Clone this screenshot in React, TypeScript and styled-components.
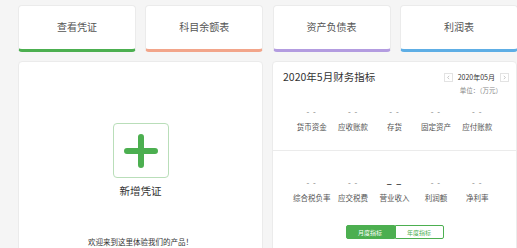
import styled, { createGlobalStyle } from "styled-components"

const Global = createGlobalStyle`
    html, body {
        margin: 0;
        background: #f5f5f5;
        font-family: "Noto Sans CJK SC", "Liberation Sans", sans-serif;
        overflow: hidden;
    }
`

const Page = styled.div`
    width: 499px;
    padding: 5px 0 0 18px;
`

const CardRow = styled.div`
    display: grid;
    grid-template-columns: repeat(4, 118px);
    column-gap: 9.3px;
`

const Card = styled.div<{ $bar: string }>`
    height: 47px;
    box-sizing: border-box;
    background: #fff;
    border: 1px solid #ebebeb;
    border-bottom: 3px solid ${props => props.$bar};
    border-radius: 4px;
    display: flex;
    align-items: center;
    justify-content: center;
    font-size: 10px;
    color: #555;
    padding-bottom: 2px;
`

const Main = styled.div`
    display: grid;
    grid-template-columns: 245px 245px;
    column-gap: 9px;
    margin-top: 9px;
`

const Panel = styled.div`
    background: #fff;
    border: 1px solid #ebebeb;
    border-radius: 4px;
    height: 210px;
    box-sizing: border-box;
`

const LeftPanel = styled(Panel)`
    display: flex;
    flex-direction: column;
    align-items: center;
    padding-top: 61px;
`

const AddBox = styled.div`
    width: 56px;
    height: 55px;
    box-sizing: border-box;
    border: 1px solid #b9deb9;
    border-radius: 4px;
    display: flex;
    align-items: center;
    justify-content: center;
`

const AddLabel = styled.div`
    margin-top: 5px;
    font-size: 10.5px;
    color: #333;
`

const Welcome = styled.div`
    margin-top: 38px;
    font-size: 7.5px;
    color: #333;
`

const Section = styled.div<{ $height: number }>`
    height: ${props => props.$height}px;
    box-sizing: border-box;
    & + & {
        border-top: 1px solid #ebebeb;
    }
`

const Header = styled.div`
    display: flex;
    justify-content: space-between;
    padding: 8px 7px 0 10px;
`

const Title = styled.div`
    font-size: 10.5px;
    color: #333;
    line-height: 14px;
`

const DateSide = styled.div`
    display: flex;
    flex-direction: column;
    align-items: flex-end;
`

const DateNav = styled.div`
    display: flex;
    align-items: center;
    gap: 5px;
    font-size: 7px;
    color: #333;
    line-height: 14px;
`

const NavBtn = styled.span`
    width: 7px;
    height: 7px;
    border: 1px solid #e3e3e3;
    display: flex;
    align-items: center;
    justify-content: center;
`

const Unit = styled.div`
    font-size: 6.5px;
    color: #888;
    margin-top: 1px;
    margin-right: 7px;
`

const Metrics = styled.div<{ $top: number }>`
    display: grid;
    grid-template-columns: repeat(5, 1fr);
    padding: ${props => props.$top}px 18px 0 18px;
`

const Metric = styled.div`
    display: flex;
    flex-direction: column;
    align-items: center;
`

const Dash = styled.div<{ $big?: boolean }>`
    font-size: ${props => props.$big ? 10 : 8}px;
    font-weight: ${props => props.$big ? 700 : 400};
    color: ${props => props.$big ? "#555" : "#777"};
    height: 12px;
    line-height: 12px;
    letter-spacing: 1px;
`

const MetricLabel = styled.div`
    margin-top: 3px;
    font-size: 7.5px;
    color: #555;
`

const Toggle = styled.div`
    display: flex;
    justify-content: center;
    margin-top: 22px;
`

const ToggleBtn = styled.div<{ $active?: boolean }>`
    width: 49px;
    height: 14px;
    box-sizing: border-box;
    border: 1px solid #4caf50;
    background: ${props => props.$active ? "#4caf50" : "#fff"};
    color: ${props => props.$active ? "#fff" : "#4caf50"};
    font-size: 6px;
    display: flex;
    align-items: center;
    justify-content: center;
    &:first-child { border-radius: 2px 0 0 2px; }
    &:last-child { border-radius: 0 2px 2px 0; }
`

const Chevron = ({ dir }: { dir: "left" | "right" }) => (
    <svg width="5" height="5" viewBox="0 0 5 5">
        <path d={dir === "left" ? "M3.2 0.8 1.6 2.5 3.2 4.2" : "M1.8 0.8 3.4 2.5 1.8 4.2"} fill="none" stroke="#bbb" strokeWidth="0.8" />
    </svg>
)

const cards = [
    { label: "查看凭证", bar: "#4caf50" },
    { label: "科目余额表", bar: "#f2a58a" },
    { label: "资产负债表", bar: "#b39ce0" },
    { label: "利润表", bar: "#5eaee5" },
]

const row1 = ["货币资金", "应收账款", "存货", "固定资产", "应付账款"]
const row2 = ["综合税负率", "应交税费", "营业收入", "利润额", "净利率"]

export default function App() {
    return (
        <>
            <Global />
            <Page>
                <CardRow>
                    {cards.map(c => <Card key={c.label} $bar={c.bar}>{c.label}</Card>)}
                </CardRow>
                <Main>
                    <LeftPanel>
                        <AddBox>
                            <svg width="34" height="34" viewBox="0 0 34 34">
                                <path d="M17 3v28M3 17h28" stroke="#4caf50" strokeWidth="6" strokeLinecap="round" />
                            </svg>
                        </AddBox>
                        <AddLabel>新增凭证</AddLabel>
                        <Welcome>欢迎来到这里体验我们的产品！</Welcome>
                    </LeftPanel>
                    <Panel>
                        <Section $height={88}>
                            <Header>
                                <Title>2020年5月财务指标</Title>
                                <DateSide>
                                    <DateNav>
                                        <NavBtn><Chevron dir="left" /></NavBtn>
                                        2020年05月
                                        <NavBtn><Chevron dir="right" /></NavBtn>
                                    </DateNav>
                                    <Unit>单位：（万元）</Unit>
                                </DateSide>
                            </Header>
                            <Metrics $top={11}>
                                {row1.map(l => (
                                    <Metric key={l}>
                                        <Dash>- -</Dash>
                                        <MetricLabel>{l}</MetricLabel>
                                    </Metric>
                                ))}
                            </Metrics>
                        </Section>
                        <Section $height={120}>
                            <Metrics $top={26}>
                                {row2.map(l => (
                                    <Metric key={l}>
                                        <Dash $big={l === "营业收入"}>{l === "营业收入" ? "– –" : "- -"}</Dash>
                                        <MetricLabel>{l}</MetricLabel>
                                    </Metric>
                                ))}
                            </Metrics>
                            <Toggle>
                                <ToggleBtn $active>月度指标</ToggleBtn>
                                <ToggleBtn>年度指标</ToggleBtn>
                            </Toggle>
                        </Section>
                    </Panel>
                </Main>
            </Page>
        </>
    )
}
